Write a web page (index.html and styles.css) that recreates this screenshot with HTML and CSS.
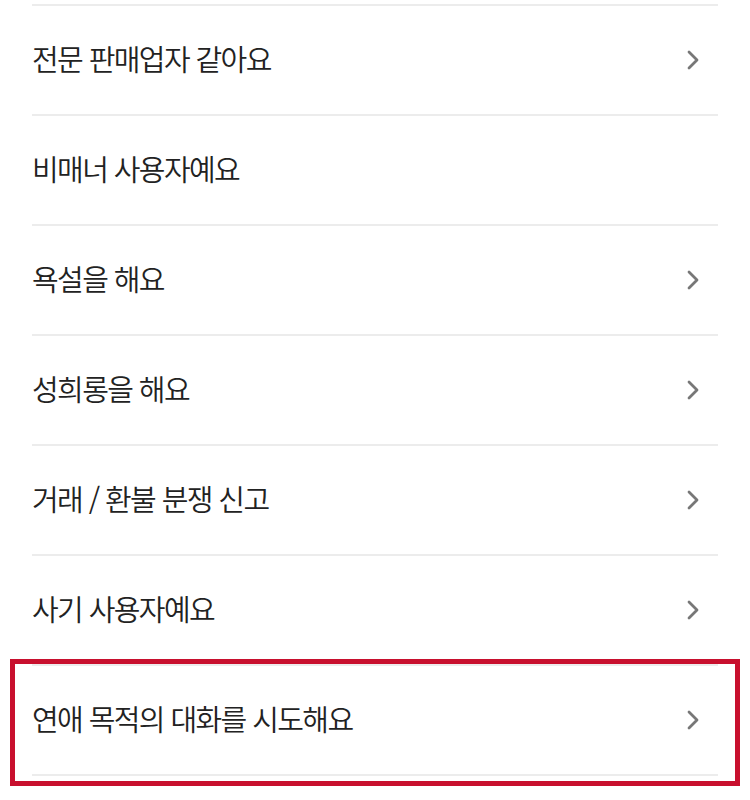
FILE: index.html
```html
<!DOCTYPE html>
<html lang="ko">
<head>
    <meta charset="UTF-8">
    <meta name="viewport" content="width=device-width, initial-scale=1.0">
    <title>신고 사유</title>
    <link rel="stylesheet" href="styles.css">
</head>
<body>
    <!-- Report reasons -->
    <ul class="reason-list">
        <li class="reason">
            <span class="reason-label">전문 판매업자 같아요</span>
            <svg class="chevron" viewBox="0 0 12 20"><path d="M2 2 L10 10 L2 18"/></svg>
        </li>
        <li class="reason">
            <span class="reason-label">비매너 사용자예요</span>
        </li>
        <li class="reason">
            <span class="reason-label">욕설을 해요</span>
            <svg class="chevron" viewBox="0 0 12 20"><path d="M2 2 L10 10 L2 18"/></svg>
        </li>
        <li class="reason">
            <span class="reason-label">성희롱을 해요</span>
            <svg class="chevron" viewBox="0 0 12 20"><path d="M2 2 L10 10 L2 18"/></svg>
        </li>
        <li class="reason">
            <span class="reason-label">거래 / 환불 분쟁 신고</span>
            <svg class="chevron" viewBox="0 0 12 20"><path d="M2 2 L10 10 L2 18"/></svg>
        </li>
        <li class="reason">
            <span class="reason-label">사기 사용자예요</span>
            <svg class="chevron" viewBox="0 0 12 20"><path d="M2 2 L10 10 L2 18"/></svg>
        </li>
        <li class="reason highlight">
            <span class="reason-label">연애 목적의 대화를 시도해요</span>
            <svg class="chevron" viewBox="0 0 12 20"><path d="M2 2 L10 10 L2 18"/></svg>
        </li>
    </ul>
</body>
</html>
```

FILE: styles.css
```css
* {
    margin: 0;
    padding: 0;
    box-sizing: border-box;
}

html, body {
    min-height: 800px;
}

body {
    background-color: #fff;
    color: #222;
    font-family: "Noto Sans CJK KR", "Noto Sans", sans-serif;
    padding-bottom: 24px;
}

.reason-list {
    list-style: none;
    margin: 4px 32px 0;
    border-top: 2px solid #ececec;
}

.reason {
    position: relative;
    display: flex;
    align-items: center;
    justify-content: space-between;
    height: 110px;
    border-bottom: 2px solid #ececec;
    padding-right: 19px;
}

.reason-label {
    font-size: 29px;
    font-weight: 350;
    letter-spacing: -1.6px;
    line-height: 1;
    margin-bottom: 3px;
}

.chevron {
    width: 12px;
    height: 20px;
    fill: none;
    stroke: #777;
    stroke-width: 2.8;
    stroke-linecap: round;
    stroke-linejoin: round;
}

/* red marker around the selected reason */
.highlight::after {
    content: "";
    position: absolute;
    top: -7px;
    left: -22px;
    right: -22px;
    bottom: -12px;
    border: 5px solid #c8102e;
    pointer-events: none;
}
```
